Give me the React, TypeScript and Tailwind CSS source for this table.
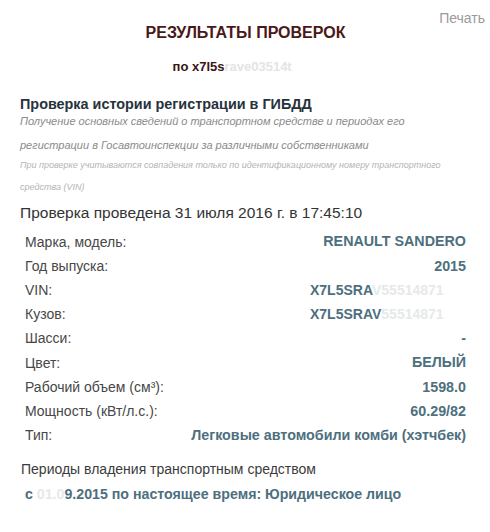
import React from "react";

const rows: { label: string; value: string; hidden?: string }[] = [
  { label: "Марка, модель:", value: "RENAULT SANDERO" },
  { label: "Год выпуска:", value: "2015" },
  { label: "VIN:", value: "X7L5SRA", hidden: "V55514871" },
  { label: "Кузов:", value: "X7L5SRAV", hidden: "55514871" },
  { label: "Шасси:", value: "-" },
  { label: "Цвет:", value: "БЕЛЫЙ" },
  { label: "Рабочий объем (см³):", value: "1598.0" },
  { label: "Мощность (кВт/л.с.):", value: "60.29/82" },
  { label: "Тип:", value: "Легковые автомобили комби (хэтчбек)" },
];

const App: React.FC = () => {
  return (
    <div className="bg-white w-[490px] h-[532px] overflow-hidden font-['Liberation_Sans',Arial,sans-serif] relative">
      <span className="absolute right-[5px] top-[8px] text-[14px] text-[#9a9a9a]">Печать</span>

      {/* Header */}
      <div className="pt-[22px] flex flex-col items-center">
        <h1 className="text-[16px] font-bold text-[#4a1818] leading-[22px] pl-[1px]">
          РЕЗУЛЬТАТЫ ПРОВЕРОК
        </h1>
        <p className="mt-[14px] text-[13px] font-bold text-[#3a1616] leading-[18px]">
          по x7l5s
          <span className="inline-block w-[93px] text-[#e4e4e4]">rave03514t</span>
        </p>
      </div>

      {/* Section */}
      <div className="px-[20px] mt-[18px]">
        <h2 className="text-[14.4px] font-bold text-[#28323c] leading-[20px]">
          Проверка истории регистрации в ГИБДД
        </h2>
        <p className="-mt-[5px] text-[11px] italic text-[#8a8a8a] leading-[24px]">
          Получение основных сведений о транспортном средстве и периодах его регистрации в
          Госавтоинспекции за различными собственниками
        </p>
        <p className="-mt-[3px] text-[9px] italic text-[#b4b4b4] leading-[22px]">
          При проверке учитываются совпадения только по идентификационному номеру транспортного
          <br />
          средства (VIN)
        </p>
        <p className="mt-[6px] text-[15.5px] text-[#333] leading-[18px]">
          Проверка проведена 31 июля 2016 г. в 17:45:10
        </p>
      </div>

      {/* Table */}
      <div className="ml-[25px] mr-[24px] mt-[8px] flex flex-col">
        {rows.map((r) => (
          <div key={r.label} className="flex justify-between items-center h-[24.2px] text-[14px]">
            <span className="text-[#474747]">{r.label}</span>
            {r.hidden ? (
              <span className="font-bold text-[#4d6f7e] w-[156px] text-left whitespace-nowrap">
                {r.value}
                <span className="text-[#e6e9ea]">{r.hidden}</span>
              </span>
            ) : (
              <span className="font-bold text-[14.3px] text-[#4d6f7e]">{r.value}</span>
            )}
          </div>
        ))}
      </div>

      {/* Ownership */}
      <div className="px-[21px] mt-[12px]">
        <p className="text-[14px] text-[#3c3c3c] leading-[18px]">Периоды владения транспортным средством</p>
        <p className="mt-[7px] ml-[4px] text-[14.2px] font-bold text-[#4d6f7e] leading-[18px]">
          с <span className="text-[#e6e9ea]">01.0</span>9.2015 по настоящее время: Юридическое лицо
        </p>
      </div>
    </div>
  );
};

export default App;
